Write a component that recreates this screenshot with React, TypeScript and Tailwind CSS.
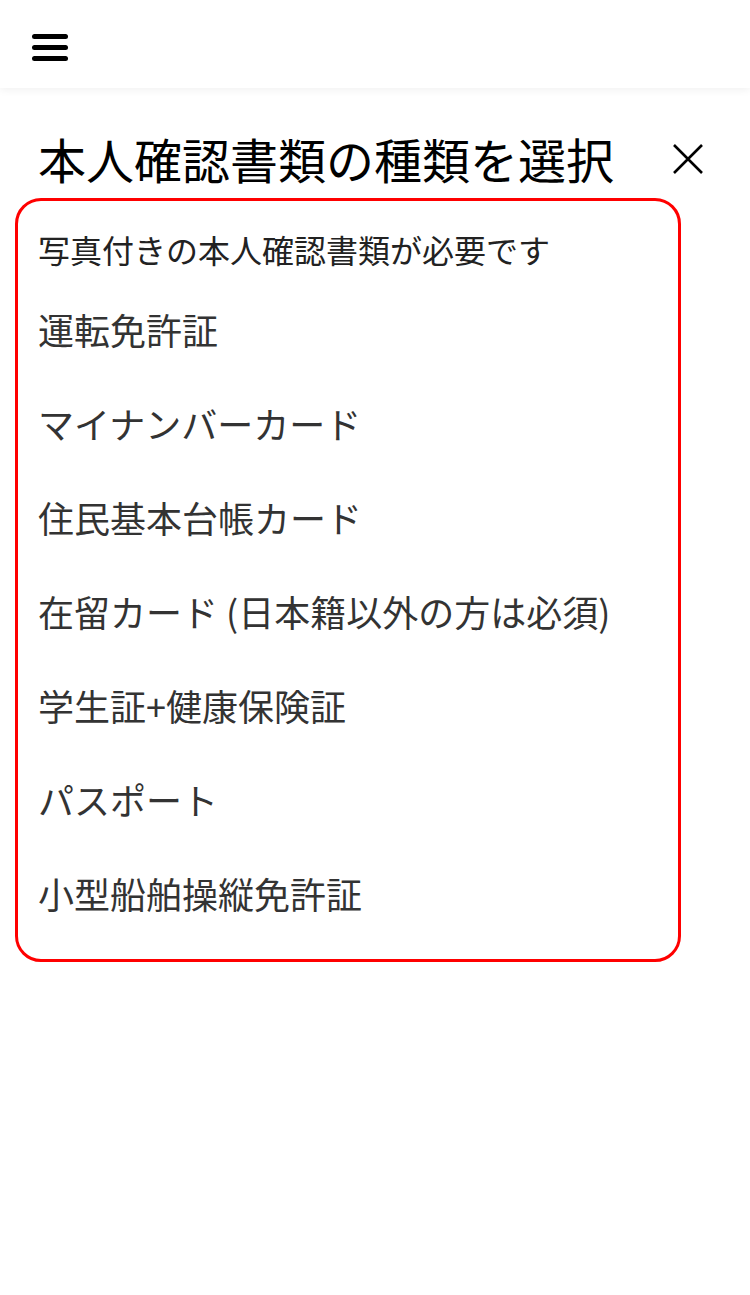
const ITEMS = [
  '運転免許証',
  'マイナンバーカード',
  '住民基本台帳カード',
  '在留カード (日本籍以外の方は必須)',
  '学生証+健康保険証',
  'パスポート',
  '小型船舶操縦免許証',
]

export default function App() {
  return (
    <div
      className="min-h-[1295px] w-[750px] bg-white"
      style={{ fontFamily: '"Noto Sans CJK JP", "Noto Sans", sans-serif' }}
    >
      {/* Header */}
      <header className="h-[88px] flex items-start pt-[34px] pl-[32px] bg-white shadow-[0_2px_8px_rgba(0,0,0,0.06)]">
        <button className="flex flex-col gap-[6px]">
          <span className="block w-[36px] h-[5px] rounded-full bg-black" />
          <span className="block w-[36px] h-[5px] rounded-full bg-black" />
          <span className="block w-[36px] h-[5px] rounded-full bg-black" />
        </button>
      </header>

      {/* Title row */}
      <div className="flex items-center justify-between pl-[38px] pr-[46px] pt-[38px] pb-[8px]">
        <h1 className="text-[48px] leading-[64px] text-black font-normal whitespace-nowrap">
          本人確認書類の種類を選択
        </h1>
        <svg width="32" height="32" viewBox="0 0 32 32" className="shrink-0 mt-[2px]">
          <path d="M2 2 L30 30 M30 2 L2 30" stroke="#000" strokeWidth="2.6" />
        </svg>
      </div>

      {/* Document list */}
      <div className="ml-[15px] w-[666px] border-[3px] border-[#ff0000] rounded-[26px] pl-[20px] pt-[24px] pb-[19px]">
        <p className="text-[32px] leading-[48px] text-[#222]">写真付きの本人確認書類が必要です</p>
        <ul className="mt-[9px] flex flex-col">
          {ITEMS.map((item) => (
            <li key={item} className="h-[94px] flex items-center text-[36px] text-[#333] whitespace-nowrap">
              {item}
            </li>
          ))}
        </ul>
      </div>
    </div>
  )
}
